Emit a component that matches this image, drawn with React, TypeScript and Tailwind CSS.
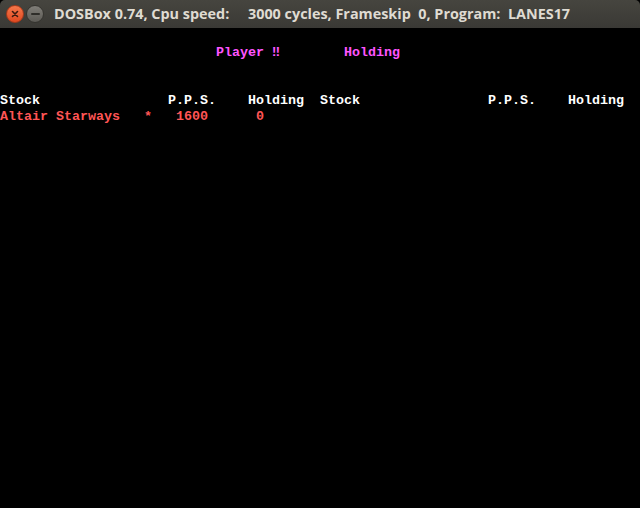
import React from "react";

const W = "text-white";
const R = "text-[#ff5555]";
const M = "text-[#ff55ff]";

type Seg = { col: number; text: string; cls: string };

function Line({ segs }: { segs: Seg[] }) {
  return (
    <div className="relative h-[16px] leading-[16px]">
      {segs.map((s, i) => (
        <span
          key={i}
          className={`absolute top-0 whitespace-pre ${s.cls}`}
          style={{ left: s.col * 8 }}
        >
          {s.text}
        </span>
      ))}
    </div>
  );
}

export default function App() {
  const rows: Seg[][] = [
    [],
    [
      { col: 27, text: "Player \u203C", cls: M },
      { col: 43, text: "Holding", cls: M },
    ],
    [],
    [],
    [
      { col: 0, text: "Stock", cls: W },
      { col: 21, text: "P.P.S.", cls: W },
      { col: 31, text: "Holding", cls: W },
      { col: 40, text: "Stock", cls: W },
      { col: 61, text: "P.P.S.", cls: W },
      { col: 71, text: "Holding", cls: W },
    ],
    [
      { col: 0, text: "Altair Starways", cls: R },
      { col: 18, text: "*", cls: R },
      { col: 22, text: "1600", cls: R },
      { col: 32, text: "0", cls: R },
    ],
  ];
  return (
    <div className="w-[640px] h-[508px] bg-black overflow-hidden flex flex-col">
      <div className="h-[28px] shrink-0 rounded-t-[5px] bg-gradient-to-b from-[#46453f] to-[#3a3935] flex items-center pl-[6px]">
        <div className="w-[18px] h-[18px] rounded-full bg-gradient-to-b from-[#f5774a] to-[#e0481f] border border-[#a8391a] flex items-center justify-center">
          <svg width="8" height="8" viewBox="0 0 8 8">
            <path d="M1.5 1.5 L6.5 6.5 M6.5 1.5 L1.5 6.5" stroke="#3b1a10" strokeWidth="1.6" strokeLinecap="round" />
          </svg>
        </div>
        <div className="ml-[2px] w-[18px] h-[18px] rounded-full bg-gradient-to-b from-[#807e78] to-[#5c5a55] border border-[#35342f] flex items-center justify-center">
          <div className="w-[9px] h-[2px] bg-[#2e2d29] rounded-sm" />
        </div>
        <div
          className="ml-[10px] whitespace-pre text-[14.4px] font-bold text-[#dfdbd2] leading-none"
          style={{ fontFamily: '"Open Sans", "DejaVu Sans", sans-serif' }}
        >
          {"DOSBox 0.74, Cpu speed:     3000 cycles, Frameskip  0, Program:  LANES17"}
        </div>
      </div>
      <div
        className="flex-1 bg-black pt-[1px] text-[13.333px] font-bold"
        style={{ fontFamily: '"Liberation Mono", "DejaVu Sans Mono", monospace' }}
      >
        {rows.map((r, i) => (
          <Line key={i} segs={r} />
        ))}
      </div>
    </div>
  );
}
